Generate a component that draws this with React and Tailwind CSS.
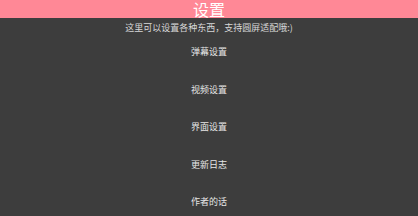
export default function App() {
  const items = ["弹幕设置", "视频设置", "界面设置", "更新日志", "作者的话"];
  return (
    <div className="w-[418px] h-[216px] overflow-hidden bg-[#3d3d3d] flex flex-col items-center" style={{ fontFamily: '"Noto Sans CJK SC", "Noto Sans", sans-serif' }}>
      <div className="w-full h-[18px] bg-[#ff8896] text-center text-white text-[16px] leading-[18px]">设置</div>
      <div className="mt-[4px] text-[9px] leading-[12px] text-[#d8d8d8]">这里可以设置各种东西，支持圆屏适配哦:)</div>
      <div className="flex flex-col items-center mt-[12px] gap-[25.5px]">
        {items.map((t) => (
          <div key={t} className="text-[9px] leading-[12px] text-[#e6e6e6]">{t}</div>
        ))}
      </div>
    </div>
  );
}
